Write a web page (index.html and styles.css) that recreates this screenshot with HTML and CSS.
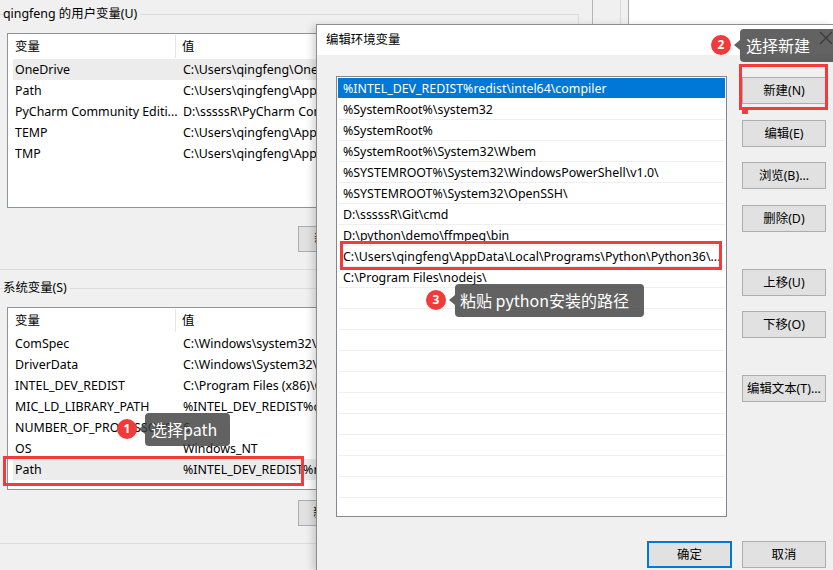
FILE: index.html
```html
<!DOCTYPE html>
<html lang="zh-CN">
<head>
<meta charset="utf-8">
<title>编辑环境变量</title>
<link rel="stylesheet" href="styles.css">
</head>
<body>
<div class="screen">
  <div class="desk">
    <div class="bgwin">
      <fieldset class="group g1">
        <legend>qingfeng 的用户变量(U)</legend>
        <div class="lv lv1">
          <div class="lv-head"><div class="h1">变量</div><div class="h2">值</div></div>
          <div class="lv-row sel"><span class="c1">OneDrive</span><span class="c2">C:\Users\qingfeng\OneDrive</span></div>
          <div class="lv-row"><span class="c1">Path</span><span class="c2">C:\Users\qingfeng\AppData\Local\Microsoft\WindowsApps;</span></div>
          <div class="lv-row"><span class="c1">PyCharm Community Editi...</span><span class="c2">D:\sssssR\PyCharm Community Edition\bin;</span></div>
          <div class="lv-row"><span class="c1">TEMP</span><span class="c2">C:\Users\qingfeng\AppData\Local\Temp</span></div>
          <div class="lv-row"><span class="c1">TMP</span><span class="c2">C:\Users\qingfeng\AppData\Local\Temp</span></div>
        </div>
        <div class="btnrow"><div class="btn">新建(N)...</div><div class="btn">编辑(E)...</div><div class="btn">删除(D)</div></div>
      </fieldset>
      <fieldset class="group g2">
        <legend>系统变量(S)</legend>
        <div class="lv lv2">
          <div class="lv-head"><div class="h1">变量</div><div class="h2">值</div></div>
          <div class="lv-row"><span class="c1">ComSpec</span><span class="c2">C:\Windows\system32\cmd.exe</span></div>
          <div class="lv-row"><span class="c1">DriverData</span><span class="c2">C:\Windows\System32\Drivers\DriverData</span></div>
          <div class="lv-row"><span class="c1">INTEL_DEV_REDIST</span><span class="c2">C:\Program Files (x86)\Common Files\Intel\Shared Libraries\</span></div>
          <div class="lv-row"><span class="c1">MIC_LD_LIBRARY_PATH</span><span class="c2">%INTEL_DEV_REDIST%compiler\lib\mic</span></div>
          <div class="lv-row"><span class="c1">NUMBER_OF_PROCESSORS</span><span class="c2">6</span></div>
          <div class="lv-row"><span class="c1">OS</span><span class="c2">Windows_NT</span></div>
          <div class="lv-row sel"><span class="c1">Path</span><span class="c2">%INTEL_DEV_REDIST%redist\intel64\compiler;</span></div>
        </div>
        <div class="btnrow"><div class="btn">新建(W)...</div><div class="btn">编辑(I)...</div><div class="btn">删除(L)</div></div>
      </fieldset>
    </div>
    <div class="strip">
      <div class="s1"></div>
      <div class="s2"></div>
      <div class="s3"></div>
    </div>
  </div>

  <div class="dialog">
    <div class="titlebar">编辑环境变量</div>
    <div class="dbody">
      <div class="drow">
        <div class="dlist">
          <div class="di sel">%INTEL_DEV_REDIST%redist\intel64\compiler</div>
          <div class="di">%SystemRoot%\system32</div>
          <div class="di">%SystemRoot%</div>
          <div class="di">%SystemRoot%\System32\Wbem</div>
          <div class="di">%SYSTEMROOT%\System32\WindowsPowerShell\v1.0\</div>
          <div class="di">%SYSTEMROOT%\System32\OpenSSH\</div>
          <div class="di">D:\sssssR\Git\cmd</div>
          <div class="di">D:\python\demo\ffmpeg\bin</div>
          <div class="di">C:\Users\qingfeng\AppData\Local\Programs\Python\Python36\...</div>
          <div class="di">C:\Program Files\nodejs\</div>
          <div class="di"></div><div class="di"></div><div class="di"></div>
          <div class="di"></div><div class="di"></div><div class="di"></div>
          <div class="di"></div><div class="di"></div><div class="di"></div>
          <div class="di"></div><div class="di"></div>
        </div>
        <div class="side">
          <div class="btn dbtn b-new">新建(N)</div>
          <div class="btn dbtn b-gap16">编辑(E)</div>
          <div class="btn dbtn b-gap15">浏览(B)...</div>
          <div class="btn dbtn b-gap16">删除(D)</div>
          <div class="btn dbtn b-gap37">上移(U)</div>
          <div class="btn dbtn b-gap15">下移(O)</div>
          <div class="btn dbtn b-gap37">编辑文本(T)...</div>
        </div>
      </div>
      <div class="dfoot">
        <div class="btn dbtn ok">确定</div>
        <div class="btn dbtn">取消</div>
      </div>
    </div>
  </div>

  <svg class="closex" width="14" height="14" viewBox="0 0 14 14"><path d="M1 1 L13 13 M13 1 L1 13" stroke="#1a1a1a" stroke-width="1.1" fill="none"/></svg>

  <div class="redbox r-path"></div>
  <div class="redbox r-new"></div>
  <div class="redmark"></div>
  <div class="redbox r-py"></div>

  <div class="tip t1">选择path</div>
  <div class="badge b1">1</div>
  <div class="tip t2">选择新建</div>
  <div class="badge b2">2</div>
  <div class="tip t3">粘贴 python安装的路径</div>
  <div class="badge b3">3</div>
</div>
</body>
</html>
```

FILE: styles.css
```css
* { box-sizing: border-box; }
html, body { margin: 0; padding: 0; }
body {
  background: #f0f0f0;
  font-family: "Noto Sans", "Noto Sans CJK SC", sans-serif;
  font-size: 12.4px;
  color: #000;
}
.screen {
  position: relative;
  width: 833px;
  height: 570px;
  overflow: hidden;
  background: #f0f0f0;
}
.desk { display: flex; height: 570px; }
.bgwin { width: 592px; flex: none; }

.group {
  width: 579px;
  min-width: 0;
  margin: 0;
  border: 1px solid #dcdcdc;
  border-left: none;
  padding: 11px 0 17px 3px;
}
.group legend {
  padding: 0 3px 0 0;
  line-height: 16px;
  height: 16px;
}
.g1 { margin-top: 6px; }
.g2 { margin-top: 10px; }

.lv {
  margin-left: 4px;
  width: 562px;
  border: 1px solid #8f939a;
  background: #fff;
  overflow: hidden;
}
.lv1 { height: 175px; }
.lv2 { height: 183px; }
.lv-head { display: flex; height: 25px; line-height: 25px; }
.lv-head .h1 {
  width: 168px;
  padding-left: 7px;
  border-right: 1px solid #e5e5e5;
  margin: 1px 0;
  line-height: 23px;
}
.lv-head .h2 { padding-left: 6px; }
.lv-row {
  display: flex;
  margin-left: 5px;
  height: 21px;
  line-height: 21px;
  white-space: nowrap;
}
.lv-row.sel { background: #ececec; }
.lv-row .c1 { width: 168px; flex: none; padding-left: 2px; overflow: hidden; }
.lv-row .c2 { padding-left: 2px; }

.btnrow { display: flex; gap: 8px; margin-top: 18px; padding-left: 295px; }
.g2 .btnrow { margin-top: 10px; }

.btn {
  width: 84px;
  height: 26px;
  flex: none;
  background: #e1e1e1;
  border: 1px solid #adadad;
  text-align: center;
  line-height: 24px;
  white-space: nowrap;
}

.strip { flex: 1; display: flex; height: 570px; }
.s1 { width: 28px; border-left: 1px solid #b4b4b4; background: #f0f0f0; }
.s2 { width: 8px; border-left: 1px solid #d9d9d9; background: #f0f0f0; }
.s3 { flex: 1; border-left: 1px solid #a8a8a8; background: #fff; }

/* dialog window */
.dialog {
  position: absolute;
  left: 316px;
  top: 24px;
  width: 517px;
  height: 546px;
  border: 1px solid #8c8c8c;
  border-right: none;
  border-bottom: none;
  background: #f0f0f0;
  box-shadow: -3px 2px 8px rgba(0, 0, 0, 0.18);
  display: flex;
  flex-direction: column;
}
.titlebar {
  height: 30px;
  line-height: 30px;
  padding-left: 9px;
  background: #fff;
  flex: none;
}
.dbody { padding: 21px 7px 0 19px; }
.drow { display: flex; }
.dlist {
  width: 391px;
  height: 441px;
  border: 1px solid #828790;
  background: #fff;
  padding: 1px;
  overflow: hidden;
  flex: none;
}
.di {
  height: 21px;
  line-height: 21px;
  border-bottom: 1px solid #efefef;
  padding-left: 5px;
  white-space: nowrap;
  overflow: hidden;
}
.di.sel { background: #0078d7; color: #fff; border-bottom-color: #0078d7; height: 20px; margin-bottom: 1px; }
.side { margin-left: 15px; display: flex; flex-direction: column; }
.dbtn { height: 27px; line-height: 25px; }
.b-new { margin-top: 1px; }
.b-gap16 { margin-top: 16px; }
.b-gap15 { margin-top: 15px; }
.b-gap37 { margin-top: 37px; }
.dfoot { display: flex; justify-content: flex-end; gap: 10px; margin-top: 24px; }
.dbtn.ok { width: 85px; border: 2px solid #0078d7; line-height: 23px; }

.closex { position: absolute; left: 819px; top: 31px; }

/* annotations */
.redbox { position: absolute; border: 3px solid #f33b3b; }
.r-path { left: 3px; top: 456px; width: 301px; height: 30px; }
.r-new { left: 739px; top: 64px; width: 89px; height: 46px; }
.r-py { left: 340px; top: 241px; width: 382px; height: 29px; }
.redmark { position: absolute; left: 742px; top: 110px; width: 6px; height: 4px; background: #f33b3b; }

.badge {
  position: absolute;
  width: 20px;
  height: 20px;
  border-radius: 50%;
  background: #f23a3a;
  color: #fff;
  font-size: 12px;
  font-weight: bold;
  text-align: center;
  line-height: 20px;
}
.b1 { left: 117px; top: 419px; }
.b2 { left: 711px; top: 35px; }
.b3 { left: 426px; top: 290px; }

.tip {
  position: absolute;
  height: 33px;
  line-height: 33px;
  padding: 0 6px;
  border-radius: 4px;
  background: rgba(64, 64, 64, 0.82);
  color: #fff;
  font-size: 16px;
  white-space: nowrap;
  font-family: "Noto Sans CJK SC", "Noto Sans", sans-serif;
}
.tip::before {
  content: "";
  position: absolute;
  left: -6px;
  top: 11px;
  border-right: 6px solid rgba(64, 64, 64, 0.82);
  border-top: 5px solid transparent;
  border-bottom: 5px solid transparent;
}
.t1 { left: 145px; top: 413px; width: 85px; }
.t2 { left: 740px; top: 29px; width: 110px; }
.t3 { left: 455px; top: 284px; width: 189px; padding-left: 5px; }
```
